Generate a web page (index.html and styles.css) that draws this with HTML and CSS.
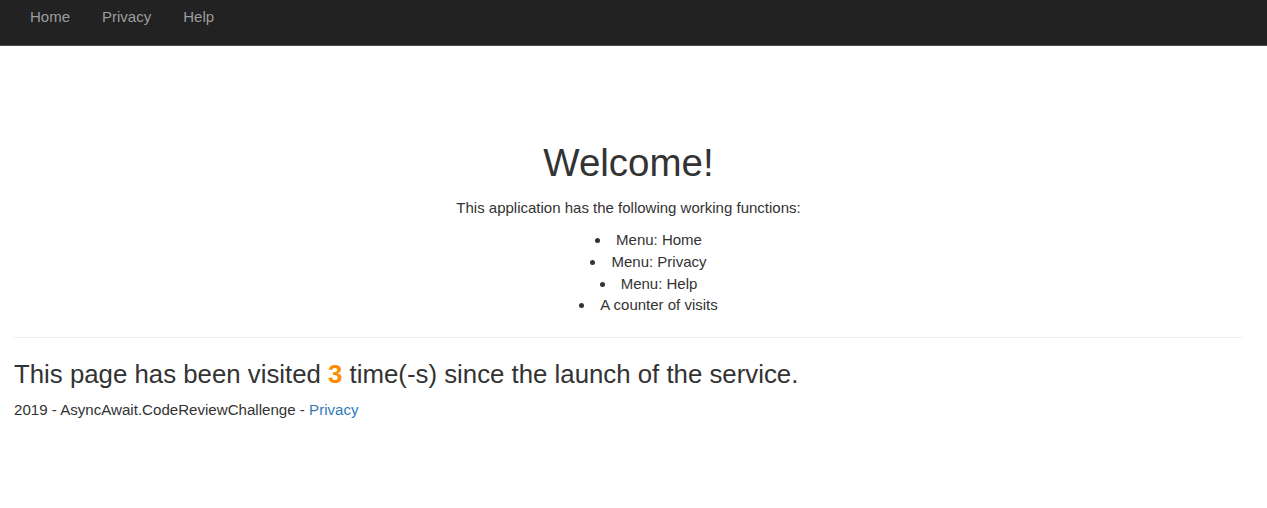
FILE: index.html
```html
<!DOCTYPE html>
<html lang="en">
<head>
<meta charset="utf-8">
<title>Home Page - AsyncAwait.CodeReviewChallenge</title>
<link rel="stylesheet" href="styles.css">
</head>
<body>
<nav class="navbar">
  <a class="nav-link" href="#">Home</a>
  <a class="nav-link" href="#">Privacy</a>
  <a class="nav-link" href="#">Help</a>
</nav>
<main class="container">
  <section class="intro">
    <h1 class="title">Welcome!</h1>
    <p class="lead">This application has the following working functions:</p>
    <ul class="features">
      <li>Menu: Home</li>
      <li>Menu: Privacy</li>
      <li>Menu: Help</li>
      <li>A counter of visits</li>
    </ul>
  </section>
  <hr class="divider">
  <h3 class="counter">This page has been visited <span class="count">3</span> time(-s) since the launch of the service.</h3>
  <footer class="footer">2019 - AsyncAwait.CodeReviewChallenge - <a class="link" href="#">Privacy</a></footer>
</main>
</body>
</html>
```

FILE: styles.css
```css
html, body {
  margin: 0;
  padding: 0;
}
body {
  font-family: "Liberation Sans", Arial, sans-serif;
  font-size: 15px;
  line-height: 21.4px;
  color: #333333;
  background: #ffffff;
}
.navbar {
  display: flex;
  align-items: center;
  height: 45px;
  background: #222222;
  border-bottom: 1px solid #4a4a4a;
  padding-left: 14px;
}
.nav-link {
  color: #9d9d9d;
  text-decoration: none;
  padding: 0 16px;
  line-height: 20px;
  margin-top: -11px;
}
.container {
  padding: 0 24px 0 14px;
}
.intro {
  text-align: center;
}
.title {
  margin: 95px 0 12px;
  font-size: 38.5px;
  line-height: 44px;
  font-weight: 400;
  color: #333333;
}
.lead {
  margin: 0 0 11px;
  line-height: 21.4px;
}
.features {
  margin: 0 0 21px;
  padding-left: 40px;
  list-style-position: inside;
  line-height: 21.6px;
}
.divider {
  margin: 0;
  border: 0;
  border-top: 1px solid #eeeeee;
}
.counter {
  margin: 22px 0 11px;
  font-size: 25.8px;
  line-height: 28.6px;
  font-weight: 400;
}
.count {
  color: #ff8c00;
  font-weight: 700;
}
.footer {
  font-size: 15.1px;
  line-height: 21.4px;
}
.link {
  color: #337ab7;
  text-decoration: none;
}
```
